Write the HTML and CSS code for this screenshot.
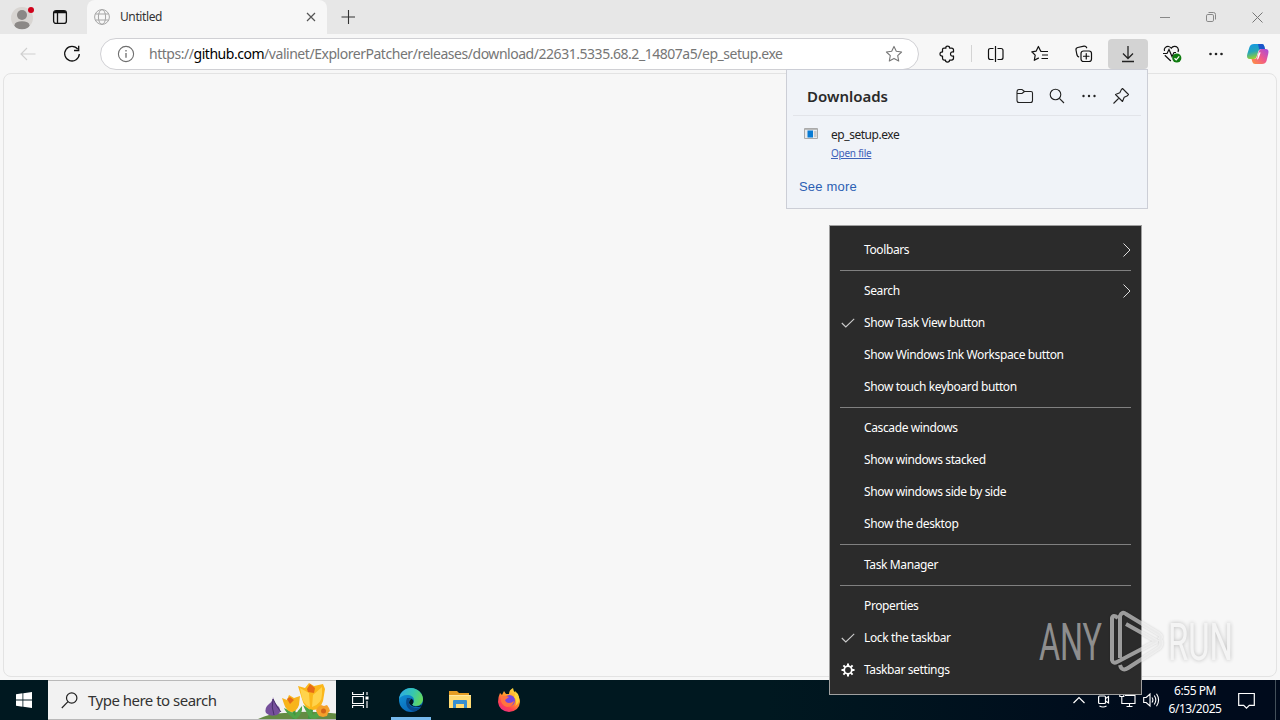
FILE: index.html
```html
<!DOCTYPE html>
<html lang="en">
<head>
<meta charset="utf-8">
<title>Untitled</title>
<link rel="stylesheet" href="styles.css">
</head>
<body>
<div class="desktop">
  <header class="tabstrip">
    <svg class="avatar" width="28" height="28" viewBox="0 0 28 28"><circle cx="13" cy="13" r="11" fill="#d8d5d2"/><circle cx="13" cy="10" r="5" fill="#8b8886"/><ellipse cx="13" cy="20.200" rx="7.500" ry="4" fill="#8b8886"/><circle cx="22" cy="5" r="3" fill="#d0021b"/></svg>
    <svg class="tabmenu" width="16" height="16" viewBox="0 0 16 16" fill="none" stroke="#111" stroke-width="1.300"><rect x="1.600" y="1.600" width="12.800" height="12.800" rx="2.500"/><path d="M2 3.500h12M5.500 4v10" /><path d="M3 3h10" stroke-width="2"/></svg>
    <div class="tab">
      <svg width="16" height="16" viewBox="0 0 16 16" fill="none" stroke="#a5a5a5"><circle cx="8" cy="8" r="7.400"/><ellipse cx="8" cy="8" rx="3.600" ry="7.400"/><path d="M1.300 5h13.400M1.300 11h13.400"/></svg>
      <span class="tab-title">Untitled</span>
      <svg class="tab-close" width="10" height="10" viewBox="0 0 10 10" stroke="#555" stroke-width="1.200"><path d="M1 1l8 8M9 1L1 9"/></svg>
    </div>
    <svg class="newtab" width="14" height="14" viewBox="0 0 14 14" stroke="#333" stroke-width="1.100"><path d="M7.500 0v14M.5 7h14"/></svg>
    <div class="winctl">
      <svg width="10" height="10" viewBox="0 0 10 10" stroke="#888"><path d="M0 5.500h10"/></svg>
      <svg width="10" height="10" viewBox="0 0 10 10" fill="none" stroke="#888"><rect x=".5" y="2.500" width="7" height="7" rx="1.300"/><path d="M2.500.5H7.500Q9.500.5 9.500 2.500V7.500"/></svg>
      <svg width="11" height="11" viewBox="0 0 11 11" stroke="#777"><path d="M.5.5l10 10M10.500.5l-10 10"/></svg>
    </div>
  </header>
  <div class="toolbar">
    <svg class="back" width="16" height="14" viewBox="0 0 16 14" fill="none" stroke="#cfcfcf" stroke-width="1.100"><path d="M15.500 7H1M7 1L1 7l6 6"/></svg>
    <svg class="reload" width="18" height="18" viewBox="0 0 18 18" fill="none" stroke="#111" stroke-width="1.300"><path d="M14.800 4.200A7.300 7.300 0 1 0 16.300 9M15.700.8v4.700H11"/></svg>
    <div class="omnibox">
      <svg width="18" height="18" viewBox="0 0 18 18" fill="none" stroke="#6e6e6e" stroke-width="1.100"><circle cx="9" cy="9" r="7.600"/><path d="M9 8v4.700M9 5v1.400" stroke-width="1.300"/></svg>
      <span class="url">https://<b>github.com</b>/valinet/ExplorerPatcher/releases/download/22631.5335.68.2_14807a5/ep_setup.exe</span>
      <svg class="star" width="18" height="18" viewBox="0 0 18 18" fill="none" stroke="#777" stroke-width="1.100" stroke-linejoin="round"><path d="M9 1.400l2.300 4.900 5.300.7-3.900 3.700 1 5.300L9 13.400 4.300 16l1-5.300L1.400 7l5.300-.7z"/></svg>
    </div>
    <div class="tools">
      <span class="tool"><svg width="18" height="18" viewBox="0 0 18 18" fill="none" stroke="#111" stroke-width="1.250" stroke-linejoin="round"><path d="M3.500 6V4.500Q3.500 3 5 3H7Q6.400 1 8.500 1T10.500 3H12.500Q14.500 3 14.500 5V7Q11.500 6.600 11.500 9T14.500 11V13Q14.500 15 12.500 15H10.500Q10.700 17 8.500 17T6.500 15H5Q3.500 15 3.500 13V11Q1 11.200 1 9T3.500 7z"/></svg></span>
      <span class="tool-div"></span>
      <span class="tool"><svg width="18" height="18" viewBox="0 0 18 18" fill="none" stroke="#111" stroke-width="1.200"><path d="M8.500 1v16M6.500 3.500H3.500Q1.500 3.500 1.500 5.500V12.500Q1.500 14.500 3.500 14.500H6.500M10.500 3.500H14Q16 3.500 16 5.500V12.500Q16 14.500 14 14.500H10.500"/></svg></span>
      <span class="tool"><svg width="18" height="18" viewBox="0 0 18 18" fill="none" stroke="#111" stroke-width="1.200" stroke-linejoin="round"><path d="M10.500 6.500L9.600 6.100 7.400 1.500 5.200 6.100.8 6.800 4.200 10.100 3.300 15.300 7.800 12.900M10 6.500h7M11 10h6M10.500 13.500H17"/></svg></span>
      <span class="tool"><svg width="18" height="18" viewBox="0 0 18 18" fill="none" stroke="#111" stroke-width="1.200" stroke-linecap="round"><rect x="6" y="6" width="10.500" height="10.500" rx="2.500"/><path d="M11.250 8.500v5.500M8.500 11.250h5.500M3.700 11.800Q2.500 11.500 2 10L1 5Q.7 3 2.700 2.500L9 1.200Q11 1 11.700 2.800"/></svg></span>
      <span class="tool tool-active"><svg width="18" height="18" viewBox="0 0 18 18" fill="none" stroke="#222" stroke-width="1.300"><path d="M9 1v12M4 8.500l5 5 5-5M3 16.500h12"/></svg></span>
      <span class="tool"><svg width="20" height="18" viewBox="0 0 20 18" fill="none" stroke="#111" stroke-width="1.200"><path d="M1 8.500h4l2-4 3 7 2-4h2M2.500 6Q1.800 4 3.200 2.600C5.500.6 8 1.400 9.300 3.200 10.800 1.200 13.600.7 15.600 2.700Q17 4.500 16 7M2.800 10.300l6 5.700"/><circle cx="14.800" cy="13" r="4.600" fill="#107c10" stroke="none"/><path d="M12.500 13.200l1.700 1.600 3-3.400" stroke="#fff"/></svg></span>
      <span class="tool"><svg width="16" height="4" viewBox="0 0 16 4" fill="#222"><circle cx="2.500" cy="2" r="1.300"/><circle cx="8" cy="2" r="1.300"/><circle cx="13.500" cy="2" r="1.300"/></svg></span>
      <span class="copilot"><svg width="24" height="22" viewBox="0 0 24 22"><defs><linearGradient id="ca" x2=".3" y2="1"><stop stop-color="#1297e8"/><stop offset=".55" stop-color="#27a6b8"/><stop offset="1" stop-color="#9bd22e"/></linearGradient><linearGradient id="cb" x1="1" x2="0" y2="1"><stop stop-color="#a34be0"/><stop offset=".5" stop-color="#f0588a"/><stop offset="1" stop-color="#ff963c"/></linearGradient></defs><path d="M8 1h8q1.700 0 2.200 2L19 6h-4q-2 0-2.600 2L10.500 14q-.6 2-2.500 2H4Q0 16 1.300 11L3.500 4Q4.500 1 8 1z" fill="url(#ca)"/><path d="M12 1h4q1.700 0 2.200 2L19 6h-4q-1 0-1.700.7z" fill="#1b55ca"/><path d="M16 21H9q-2 0-2.600-2L5.500 16H8.500q2 0 2.500-2l2-6q.6-2 2.500-2h4q4 0 2.700 5L20.500 18Q19.500 21 16 21z" fill="url(#cb)"/><path d="M12.700 9.500h2l-2.200 6q-.5 1-1.500 1z" fill="#fff"/></svg></span>
    </div>
  </div>
  <main class="page"></main>
  <footer class="taskbar">
    <div class="start"><svg width="16" height="16" viewBox="0 0 16 16" fill="#fff"><path d="M0 2.200l6.500-.9v6.300H0zM7.300 1.200L16 0v7.600H7.300zM0 8.400h6.500v6.300L0 13.800zM7.300 8.400H16V16l-8.700-1.200z"/></svg></div>
    <div class="search">
      <svg width="17" height="17" viewBox="0 0 17 17" fill="none" stroke="#222" stroke-width="1.200"><circle cx="10.700" cy="6" r="5.200"/><path d="M7 9.700L.8 16"/></svg>
      <span class="search-text">Type here to search</span>
      <svg class="flowers" width="78" height="38" viewBox="0 0 78 38">
        <path d="M0 38Q14 31 30 32Q54 29 82 33V38z" fill="#648b43"/>
        <path d="M15 16Q16 22 21 26Q24 31 19 34Q12 36 8 32Q6 27 11 23Q15 20 15 16z" fill="#76509b"/><path d="M15 18Q13 26 16 34M15 18Q19 27 23 31" stroke="#49306c" fill="none"/>
        <path d="M36 38V27M51 38Q55 30 53 22" stroke="#3b9a42" stroke-width="3" fill="none"/>
        <path d="M35 37Q27 31 26 27Q34 30 37 35Q40 29 44 25Q45 33 38 38M52 37Q47 29 45 24Q54 28 55 34Q61 28 69 25Q66 34 57 38z" fill="#50a448"/>
        <path d="M24 17l5 2 2-5 5 3 6-2-1 9q-2 6-7 7-6-1-8-8z" fill="#f8b41a"/>
        <path d="M40 5l7 2 4-5 5 3 9-2 2 5-2 12q-3 9-10 9-9-1-11-11z" fill="#fbb71b"/>
        <path d="M42 7l9 5 1 14q-8-3-9-14zM64 6l-9 8-1 12q10-3 10-13z" fill="#ffd34c"/>
        <path d="M49 8l3-5 5 4-1 5-6-1zM29 18l3-2 4 3-4 4z" fill="#e66c17"/>
        <path d="M60 26l3-2 3 1 3-1 2 3 1 3-2 2-1 3-4 1-4-1-2-3-1-3z" fill="#f4a02b"/><circle cx="65.500" cy="30" r="2.500" fill="#d36618"/>
      </svg>
    </div>
    <div class="apps">
      <span class="app"><svg width="17" height="16" viewBox="0 0 17 16" fill="none" stroke="#fff" stroke-width="1.100"><path d="M.6 0v2.500h10.800V0M.6 16v-2.500h10.800V16M.6 4.500h10.800v7H.6zM15 0v3M15 9v7"/><rect x="13.500" y="4.500" width="3" height="3" fill="#fff" stroke="none"/></svg></span>
      <span class="app app-edge"><svg width="26" height="26" viewBox="0 0 26 26"><defs><linearGradient id="ea" y1=".2" y2=".5"><stop stop-color="#2da9e8"/><stop offset=".55" stop-color="#36c6b0"/><stop offset="1" stop-color="#64d85c"/></linearGradient><linearGradient id="eb" x2=".6" y2="1"><stop stop-color="#139bdb"/><stop offset="1" stop-color="#0864b7"/></linearGradient></defs><circle cx="13" cy="13" r="12" fill="url(#eb)"/><path d="M1 12C2 5 7 1 13 1s12 5 12 11c0 4-3 7-7 7-3 0-4-1-4-2 0 0 2-1 2-4 0-3-3-5-7-5-4 0-7 2-8 4z" fill="url(#ea)"/><path d="M9 11c-3 7 2 13 7 13 3 0 6-2 7-4-4 2-11 1-12-4-.4-2 .3-3.500 2-5z" fill="#094a8c"/><path d="M11 16q-.2-3 2.500-4.500Q16 13 15.500 15T14 17.500q1 2 4 2 3.500 0 6-2l-1 2q-9 2-12-3.500z" fill="#001620"/></svg></span>
      <span class="app"><svg width="22" height="20" viewBox="0 0 22 20"><path d="M0 1h8l2 2h10v4H0z" fill="#e59d23"/><path d="M0 5h22v13H0z" fill="#ffda72"/><path d="M0 5h22v1H0z" fill="#ffe8a0"/><path d="M4 18v-7q0-1 1-1h12q1 0 1 1v7h-3v-4H7v4z" fill="#358ed0"/></svg></span>
      <span class="app"><svg width="24" height="24" viewBox="0 0 24 24"><defs><linearGradient id="fa" x1=".8" x2=".2" y2="1"><stop stop-color="#ffe43e"/><stop offset=".45" stop-color="#ff922b"/><stop offset=".75" stop-color="#ff4053"/><stop offset="1" stop-color="#e52c8c"/></linearGradient></defs><path d="M3 5l2 2 2-4 2 3h3q0-4 4-6 0 3 3 5 4 4 4 9-.7 9-11 10Q2 23 1 14q0-5 2-9z" fill="url(#fa)"/><circle cx="12.500" cy="12.500" r="5.500" fill="#7547df"/><path d="M4 9q4-2 8 0l-4 3q1 3 4 3 3 0 5-2-1 6-7 6Q3 17 4 9z" fill="#ff7340"/><path d="M17 9q4 4 1 9 5-3 4-9-1-4-4-6 1 3-1 6z" fill="#ffd43b"/></svg></span>
    </div>
    <div class="tray">
      <svg class="t-up" width="12" height="8" viewBox="0 0 12 8" fill="none" stroke="#fff" stroke-width="1.200"><path d="M.5 7L6 1.500 11.500 7"/></svg>
      <svg class="t-cam" width="13" height="16" viewBox="0 0 13 16" fill="none" stroke="#fff" stroke-width="1.200"><rect x="1.600" y="4" width="6.900" height="7.500" rx="1"/><path d="M8.500 6.500l3-2v6.500L8.500 9M2.500 14q3.500 2 7 0"/></svg>
      <svg class="t-net" width="17" height="16" viewBox="0 0 17 16" fill="none" stroke="#fff" stroke-width="1.100"><path d="M.8 1.500h4v3h-4zM2.800 4.500v7h5M6 3.500h10v8H6M10.500 11.500v3M7.500 14.500h6"/></svg>
      <svg class="t-vol" width="17" height="16" viewBox="0 0 17 16" fill="none" stroke="#fff" stroke-width="1.100"><path d="M.7 5.500h2.500L7 2v12l-3.800-3.500H.7zM9 5.500q1.800 2.500 0 5M11.300 3.500q3 4.500 0 9M13.500 1.700q4.200 6.300 0 12.600"/></svg>
      <div class="clock"><span>6:55 PM</span><span>6/13/2025</span></div>
      <svg class="t-note" width="17" height="17" viewBox="0 0 17 17" fill="none" stroke="#fff" stroke-width="1.200"><path d="M.7 1.500h15.600v11.800h-5l-2.800 2.800-2.800-2.800h-5z"/></svg>
      <i class="peek"></i>
    </div>
  </footer>

  <section class="downloads">
    <div class="dl-head">
      <h2>Downloads</h2>
      <svg width="18" height="16" viewBox="0 0 18 16" fill="none" stroke="#222" stroke-width="1.100"><path d="M1 4Q1 1.500 3 1.500H6L8.500 3.500H15Q16.500 3.500 16.500 5V12.500Q16.500 14.500 14.500 14.500H3Q1 14.500 1 12.500zM1 5.500H6L8.500 3.500"/></svg>
      <svg width="16" height="16" viewBox="0 0 16 16" fill="none" stroke="#222" stroke-width="1.100"><circle cx="6.500" cy="6.500" r="5.300"/><path d="M10.400 10.400L15 15"/></svg>
      <svg width="16" height="4" viewBox="0 0 16 4" fill="#222"><circle cx="2.500" cy="2" r="1.200"/><circle cx="8" cy="2" r="1.200"/><circle cx="13.500" cy="2" r="1.200"/></svg>
      <svg width="18" height="18" viewBox="0 0 18 18" fill="none" stroke="#222" stroke-width="1.100" stroke-linejoin="round"><path d="M10.500 1.500L16.500 7.500 15 9 12.200 10.200 10.500 14.500 3.500 7.500 7.800 5.800 9.300 2.700zM7 11L1.500 16.500"/></svg>
    </div>
    <div class="dl-item">
      <svg width="14" height="12" viewBox="0 0 14 12"><path d="M.5.5h13v10H.5z" fill="#e8eaed" stroke="#aaa"/><path d="M1 1h12v1H1z" fill="#bbb"/><path d="M3.500 2.500h5.500v7H3.500z" fill="#087bd4"/><path d="M10 4h2.500M10 6h2.500M10 8h2.500" stroke="#aaa"/></svg>
      <div class="dl-text"><span class="dl-name">ep_setup.exe</span><a class="dl-open">Open file</a></div>
    </div>
    <a class="more">See more</a>
  </section>

  <nav class="menu">
    <div class="item"><span>Toolbars</span><svg class="chev" width="9" height="14" viewBox="0 0 9 14" fill="none" stroke="#ddd"><path d="M1.500.5L8 7l-6.500 6.500"/></svg></div>
    <hr>
    <div class="item"><span>Search</span><svg class="chev" width="9" height="14" viewBox="0 0 9 14" fill="none" stroke="#ddd"><path d="M1.500.5L8 7l-6.500 6.500"/></svg></div>
    <div class="item"><i class="mark"><svg width="14" height="10" viewBox="0 0 14 10" fill="none" stroke="#ccc" stroke-width="1.100"><path d="M.8 5l4 4L13.200.8"/></svg></i><span>Show Task View button</span></div>
    <div class="item"><span>Show Windows Ink Workspace button</span></div>
    <div class="item"><span>Show touch keyboard button</span></div>
    <hr>
    <div class="item"><span>Cascade windows</span></div>
    <div class="item"><span>Show windows stacked</span></div>
    <div class="item"><span>Show windows side by side</span></div>
    <div class="item"><span>Show the desktop</span></div>
    <hr>
    <div class="item"><span>Task Manager</span></div>
    <hr>
    <div class="item"><span>Properties</span></div>
    <div class="item"><i class="mark"><svg width="14" height="10" viewBox="0 0 14 10" fill="none" stroke="#ccc" stroke-width="1.100"><path d="M.8 5l4 4L13.200.8"/></svg></i><span>Lock the taskbar</span></div>
    <div class="item"><i class="mark"><svg width="14" height="14" viewBox="0 0 14 14" fill="none" stroke="#fff"><circle cx="7" cy="7" r="3.800" stroke-width="1.800"/><path d="M7 .5V3M7 11v2.500M.5 7H3M11 7h2.500M2.400 2.400l1.700 1.700M9.900 9.900l1.700 1.700M11.600 2.400L9.900 4.100M4.100 9.900l-1.700 1.700" stroke-width="2"/></svg></i><span>Taskbar settings</span></div>
  </nav>

  <svg class="watermark" width="244" height="90" viewBox="0 0 244 90">
    <g class="wm-left"><text x="3" y="52" textLength="63" lengthAdjust="spacingAndGlyphs">ANY</text></g>
    <g class="wm-right"><text x="132" y="52" textLength="65" lengthAdjust="spacingAndGlyphs">RUN</text></g>
    <path class="wm-logo" d="M82 10q-5-4-6 0v42q1 4 5 2L121 33M84 50V8q2-5 6-2L123 26q4 3 0 6M90 16l32 18M84 57q2 7 8 3L123 40q4-4 1-9" />
  </svg>
</div>
</body>
</html>
```
FILE: styles.css
```css
* { box-sizing: border-box; }
body { margin: 0; font-family: "Noto Sans", "Open Sans", sans-serif; }
svg { display: block; flex: none; }
.desktop { position: relative; width: 1280px; height: 720px; overflow: hidden; background: #f7f7f7; display: flex; flex-direction: column; }
.tabstrip { height: 34px; background: #e7e7e7; display: flex; align-items: center; flex: none; }
.avatar { margin-left: 9px; margin-top: 4px; }
.tabmenu { margin-left: 15px; }
.tab { width: 240px; height: 34px; margin-left: 19px; padding: 0 11px 0 7px; background: #f7f7f7; border-radius: 8px 8px 0 0; display: flex; align-items: center; }
.tab-title { margin-left: 10px; margin-top: -1px; font-size: 12px; letter-spacing: -.4px; color: #333; }
.tab-close { margin-left: auto; }
.newtab { margin-left: 14px; }
.winctl { margin-left: auto; margin-right: 17px; display: flex; gap: 36px; align-items: center; }
.toolbar { height: 39px; display: flex; align-items: center; flex: none; }
.back { margin-left: 20px; }
.reload { margin-left: 27px; }
.omnibox { width: 819px; height: 32px; margin-left: 19px; padding: 0 15px 0 16px; border: 1px solid #d0d0d4; border-radius: 16px; background: #fff; display: flex; align-items: center; }
.url { margin-left: 14px; font-size: 14px; letter-spacing: -.465px; color: #767676; white-space: nowrap; }
.url b { font-weight: 400; color: #000; }
.star { margin-left: auto; }
.tools { display: flex; align-items: center; margin-left: 9px; }
.tool { width: 40px; height: 30px; margin-right: 4px; display: flex; align-items: center; justify-content: center; border-radius: 4px; }
.tool-active { background: #d3d3d3; }
.tool-div { width: 1px; height: 17px; background: #d4d4d4; margin: 0 4px 0 -1px; }
.copilot { margin-left: 6px; }
.page { margin: 0 3px 3px; flex: 1; border: 1px solid #e3e3e3; border-radius: 8px; background: #f7f7f7; }
.taskbar { height: 40px; flex: none; display: flex; background: linear-gradient(90deg, #001820, #001820 60%, #000b1c 90%); }
.start { width: 48px; display: flex; align-items: center; justify-content: center; }
.search { width: 288px; height: 40px; display: flex; align-items: center; padding-left: 13px; background: #f2f2f2; border-top: 1px solid #b9b9b9; border-bottom: 1px solid #b9b9b9; }
.search-text { margin-left: 10px; font-size: 15px; letter-spacing: -.51px; color: #333; white-space: nowrap; }
.flowers { margin-left: auto; }
.apps { display: flex; }
.app { width: 49px; display: flex; align-items: center; justify-content: center; }
.app-edge { width: 40px; margin: 0 4px 0 6px; padding-top: 3px; border-bottom: 3px solid #76b9ed; }
.tray { margin-left: auto; display: flex; align-items: center; }
.t-cam { margin-left: 12px; }
.t-net { margin-left: 9px; }
.t-vol { margin-left: 7px; }
.clock { width: 70px; display: flex; flex-direction: column; align-items: center; color: #fff; font-size: 12px; line-height: 18px; letter-spacing: -.45px; }
.t-note { margin-left: 8px; }
.peek { width: 1px; height: 40px; background: #43505a; margin: 0 4px 0 20px; }

.downloads { position: absolute; left: 786px; top: 69px; width: 362px; height: 140px; background: #f0f3f8; border: 1px solid #ccced6; padding: 0 6px; }
.dl-head { height: 46px; display: flex; align-items: center; gap: 15.500px; padding: 7px 11px 0 14px; border-bottom: 1px solid #e2e4e9; }
.dl-head h2 { margin: 0 auto 0 0; font-size: 15px; font-weight: 600; color: #2a2a2a; letter-spacing: 0; line-height: 20px; }
.dl-item { display: flex; padding: 12px 0 0 11px; }
.dl-text { margin-left: 13px; display: flex; flex-direction: column; align-items: flex-start; }
.dl-name { font-size: 12px; line-height: 14px; color: #222; letter-spacing: -.45px; }
.dl-open { font-size: 10px; line-height: 14px; margin-top: 4px; color: #3d61b8; text-decoration: underline; letter-spacing: -.25px; }
.more { display: block; margin: 18px 0 0 6px; font: 13px/18px "Liberation Sans", Arial, sans-serif; color: #2c5fb3; letter-spacing: .2px; }

.menu { position: absolute; left: 829px; top: 225px; width: 313px; height: 470px; padding: 8px 10px; background: #2b2b2b; border: 1px solid #a0a0a0; color: #fff; font-size: 12px; }
.menu hr { height: 1px; margin: 4px 0; border: 0; background: #808080; }
.item { height: 32px; padding-left: 24px; display: flex; align-items: center; letter-spacing: -.38px; white-space: nowrap; }
.item span { padding-bottom: 2px; }
.mark { width: 24px; margin: 0 0 1px -24px; padding-left: 1px; }
.chev { margin-left: auto; margin-bottom: 1px; }
.watermark { position: absolute; left: 1036px; top: 608px; }
.watermark text { font: 52px Roboto, sans-serif; }
.wm-left { fill: rgba(255,255,255,.48); }
.wm-right { fill: #f4f4f4; filter: drop-shadow(0 0 2px rgba(0,0,0,.3)); opacity: .8; }
.wm-logo { fill: none; stroke: rgba(255,255,255,.55); stroke-width: 4; filter: drop-shadow(0 0 1px rgba(0,0,0,.3)); }
```
